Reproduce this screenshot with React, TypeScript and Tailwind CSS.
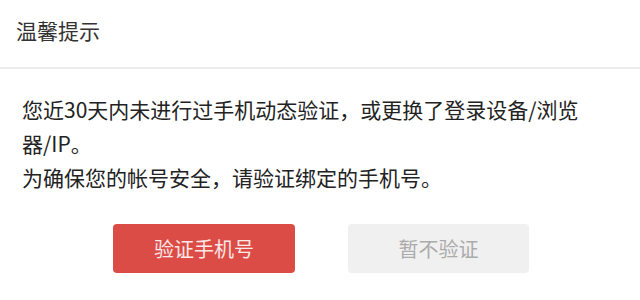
export default function App() {
  const font = { fontFamily: '"Noto Sans CJK SC", "Noto Sans", sans-serif' };
  return (
    <div className="w-[640px] h-[300px] bg-white overflow-hidden" style={font}>
      <div className="h-[67px] pl-[16px] pt-[16px]">
        <div className="text-[21px] leading-[28px] text-[#333333]">温馨提示</div>
      </div>
      <div className="h-[2px] bg-[#ebebeb]" />
      <div className="pl-[22px] pr-[40px] pt-[23px] text-[21px] leading-[34px] text-[#222222]">
        <p>您近30天内未进行过手机动态验证，或更换了登录设备/浏览器/IP。</p>
        <p>为确保您的帐号安全，请验证绑定的手机号。</p>
      </div>
      <div className="flex justify-center gap-[53px] mt-[30px] pl-[2px]">
        <button className="w-[182px] h-[49px] rounded-[4px] bg-[#dc4c46] text-[#fde8e7] text-[20px] flex items-center justify-center">
          验证手机号
        </button>
        <button className="w-[181px] h-[49px] rounded-[4px] bg-[#f0f0f0] text-[#ababab] text-[20px] flex items-center justify-center">
          暂不验证
        </button>
      </div>
    </div>
  );
}
